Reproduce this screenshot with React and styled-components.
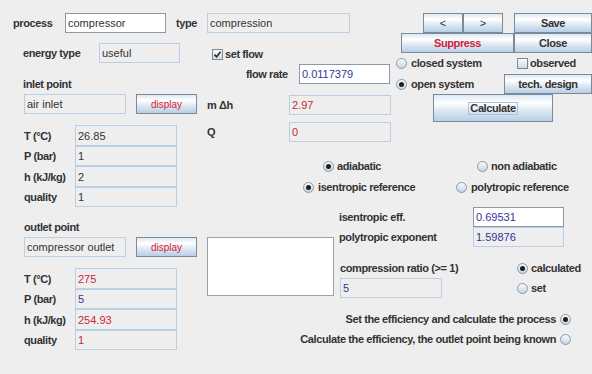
import React from "react";
import styled, { createGlobalStyle, css } from "styled-components";

const GlobalStyle = createGlobalStyle`
  html, body { margin: 0; padding: 0; background: #eeeeee; }
  body { font-family: "Liberation Sans", Arial, sans-serif; }
  * { box-sizing: border-box; }
`;

const tones = { dark: "#333333", red: "#c8283a", blue: "#34349c" };

const Panel = styled.div`
  display: flex;
  width: 592px;
  height: 374px;
  background: #eeeeee;
  overflow: hidden;
  color: #333333;
`;

const Column = styled.div`
  display: flex;
  flex-direction: column;
  width: ${(p) => p.$w}px;
  flex-shrink: 0;
  margin-left: ${(p) => p.$ml || 0}px;
`;

const Upper = styled.div`
  display: flex;
  height: 142px;
`;

const Lower = styled.div`
  display: flex;
  align-items: flex-start;
  height: 91px;
  margin-top: 13px;
`;

const Row = styled.div`
  display: flex;
  align-items: center;
  flex-shrink: 0;
  height: ${(p) => p.$h || 20}px;
  margin-top: ${(p) => p.$mt || 0}px;
  padding-left: ${(p) => p.$pl || 0}px;
  padding-right: ${(p) => p.$pr || 0}px;
  justify-content: ${(p) => (p.$end ? "flex-end" : "flex-start")};
`;

const Label = styled.span`
  font-weight: bold;
  font-size: 11px;
  letter-spacing: -0.4px;
  white-space: nowrap;
  color: #333333;
  margin-left: ${(p) => p.$ml || 0}px;
  ${(p) =>
    p.$w &&
    css`
      width: ${p.$w}px;
      flex-shrink: 0;
    `}
`;

const Field = styled.div`
  width: ${(p) => p.$w}px;
  height: ${(p) => p.$h || 20}px;
  flex-shrink: 0;
  display: flex;
  align-items: center;
  padding: 0 2px;
  font-size: 11px;
  white-space: nowrap;
  overflow: hidden;
  color: ${(p) => tones[p.$tone || "dark"]};
  background: ${(p) => (p.$edit ? "#ffffff" : "#eeeeee")};
  border: 1px solid ${(p) => (p.$edit ? "#8c99a6" : "#b8cfe5")};
  margin-left: ${(p) => p.$ml || 0}px;
`;

const PropGrid = styled.div`
  display: grid;
  grid-template-columns: 51px 102px;
  grid-template-rows: 21px 20px 21px 20px;
  align-items: center;
  margin-top: 11px;
  padding-left: 24px;
  & > ${Field} {
    height: 100%;
  }
`;

const Btn = styled.div`
  width: ${(p) => p.$w}px;
  height: ${(p) => p.$h || 20}px;
  flex-shrink: 0;
  display: flex;
  align-items: center;
  justify-content: center;
  margin-left: ${(p) => p.$ml || 0}px;
  border: 1px solid #7a8a99;
  background: linear-gradient(
    to bottom,
    #dde8f3 0%,
    #ffffff 30%,
    #dde8f3 60%,
    #b8cfe5 100%
  );
  font-size: ${(p) => (p.$small ? 10 : 11)}px;
  font-weight: ${(p) => (p.$plain || p.$small ? "normal" : "bold")};
  letter-spacing: ${(p) => (p.$plain || p.$small ? "0" : "-0.4px")};
  color: ${(p) => (p.$tone === "red" ? "#d42033" : "#333333")};
  white-space: nowrap;
`;

const Focus = styled.span`
  border: 1px solid #a9c0d6;
  padding: 0 1px;
  line-height: 11px;
`;

const Circle = styled.span`
  width: 11px;
  height: 11px;
  flex-shrink: 0;
  border-radius: 50%;
  border: 1px solid #8a98a6;
  background: linear-gradient(to bottom, #f8fafd, #c6d6e6);
  display: inline-flex;
  align-items: center;
  justify-content: center;
  margin-left: ${(p) => p.$ml || 0}px;
  &::after {
    content: "";
    width: 5px;
    height: 5px;
    border-radius: 50%;
    background: ${(p) => (p.$on ? "#1e1e1e" : "transparent")};
  }
`;

const Box = styled.span`
  width: 11px;
  height: 11px;
  flex-shrink: 0;
  border: 1px solid #7a8a99;
  background: linear-gradient(to bottom, #f8fafd, #cddbe9);
  display: inline-flex;
  align-items: center;
  justify-content: center;
`;

const Choice = styled.div`
  display: flex;
  align-items: center;
  gap: ${(p) => p.$gap ?? 3}px;
  flex-shrink: 0;
  margin-left: ${(p) => p.$ml || 0}px;
  ${(p) =>
    p.$w &&
    css`
      width: ${p.$w}px;
    `}
`;

const TextBox = styled.div`
  width: 127px;
  height: 59px;
  margin: 30px 0 0 7px;
  flex-shrink: 0;
  background: #ffffff;
  border: 1px solid #98a3ae;
`;

const Radio = ({ on, label, w, ml, gap }) => (
  <Choice $w={w} $ml={ml} $gap={gap}>
    <Circle $on={on} />
    <Label>{label}</Label>
  </Choice>
);

const Check = ({ on, label, w }) => (
  <Choice $w={w} $gap={2}>
    <Box>
      {on && (
        <svg width="9" height="9" viewBox="0 0 9 9">
          <path
            d="M1.5 4.6 L3.6 6.8 L7.6 1.8"
            fill="none"
            stroke="#2b2b2b"
            strokeWidth="1.6"
          />
        </svg>
      )}
    </Box>
    <Label>{label}</Label>
  </Choice>
);

const Props = ({ values }) => (
  <PropGrid>
    {[
      ["T (°C)", values[0]],
      ["P (bar)", values[1]],
      ["h (kJ/kg)", values[2]],
      ["quality", values[3]],
    ].map(([l, [v, tone]]) => (
      <React.Fragment key={l}>
        <Label>{l}</Label>
        <Field $w={102} $tone={tone}>
          {v}
        </Field>
      </React.Fragment>
    ))}
  </PropGrid>
);

export default function App() {
  return (
    <>
      <GlobalStyle />
      <Panel>
        <Column $w={200}>
          <Row $mt={13} $pl={13}>
            <Label $w={52}>process</Label>
            <Field $w={101} $edit>
              compressor
            </Field>
            <Label $ml={10}>type</Label>
          </Row>
          <Row $mt={10} $pl={23}>
            <Label $w={76}>energy type</Label>
            <Field $w={81}>useful</Field>
          </Row>
          <Row $mt={14} $h={14} $pl={23}>
            <Label>inlet point</Label>
          </Row>
          <Row $mt={3} $pl={24}>
            <Field $w={102}>air inlet</Field>
            <Btn $w={61} $ml={10} $small $tone="red">
              display
            </Btn>
          </Row>
          <Props
            values={[
              ["26.85", "dark"],
              ["1", "dark"],
              ["2", "dark"],
              ["1", "dark"],
            ]}
          />
          <Row $mt={13} $h={14} $pl={24}>
            <Label>outlet point</Label>
          </Row>
          <Row $mt={3} $pl={24}>
            <Field $w={102}>compressor outlet</Field>
            <Btn $w={61} $ml={10} $small $tone="red">
              display
            </Btn>
          </Row>
          <Props
            values={[
              ["275", "red"],
              ["5", "blue"],
              ["254.93", "red"],
              ["1", "red"],
            ]}
          />
        </Column>

        <Column $w={392}>
          <Upper>
            <Column $w={195}>
              <Row $mt={13} $pl={7}>
                <Field $w={143}>compression</Field>
              </Row>
              <Row $mt={14} $h={14} $pl={12}>
                <Check on label="set flow" />
              </Row>
              <Row $mt={3} $pl={46}>
                <Label $w={53}>flow rate</Label>
                <Field $w={91} $edit $tone="blue">
                  0.0117379
                </Field>
              </Row>
              <Row $mt={11} $pl={7}>
                <Label $w={82}>m Δh</Label>
                <Field $w={102} $tone="red">
                  2.97
                </Field>
              </Row>
              <Row $mt={7} $pl={7}>
                <Label $w={82}>Q</Label>
                <Field $w={102} $tone="red">
                  0
                </Field>
              </Row>
            </Column>

            <Column $w={197}>
              <Row $mt={13} $pl={28}>
                <Btn $w={40} $plain>
                  &lt;
                </Btn>
                <Btn $w={40} $plain>
                  &gt;
                </Btn>
                <Btn $w={78} $ml={11}>
                  Save
                </Btn>
              </Row>
              <Row $pl={6}>
                <Btn $w={113} $tone="red">
                  Suppress
                </Btn>
                <Btn $w={78}>Close</Btn>
              </Row>
              <Row $mt={3} $h={14} $pl={1}>
                <Radio w={121} gap={4} label="closed system" />
                <Check label="observed" />
              </Row>
              <Row $mt={4} $pl={1}>
                <Radio w={108} gap={4} on label="open system" />
                <Btn $w={88}>tech. design</Btn>
              </Row>
              <Row $h={28} $pl={38}>
                <Btn $w={120} $h={28}>
                  <Focus>Calculate</Focus>
                </Btn>
              </Row>
            </Column>
          </Upper>

          <Row $mt={17} $h={14} $pl={123}>
            <Radio w={154} on label="adiabatic" />
            <Radio label="non adiabatic" />
          </Row>
          <Row $mt={7} $h={14} $pl={103}>
            <Radio w={153} gap={4} on label="isentropic reference" />
            <Radio gap={4} label="polytropic reference" />
          </Row>

          <Lower>
            <TextBox />
            <Column $w={253} $ml={5}>
              <Row>
                <Label $w={134}>isentropic eff.</Label>
                <Field $w={91} $edit $tone="blue">
                  0.69531
                </Field>
              </Row>
              <Row>
                <Label $w={134}>polytropic exponent</Label>
                <Field $w={91} $tone="blue">
                  1.59876
                </Field>
              </Row>
              <Row $mt={14} $h={14} $pl={1}>
                <Label $w={177}>compression ratio (&gt;= 1)</Label>
                <Radio on gap={3} label="calculated" />
              </Row>
              <Row $mt={3} $pl={1}>
                <Field $w={102} $tone="blue">
                  5
                </Field>
                <Radio ml={75} gap={3} label="set" />
              </Row>
            </Column>
          </Lower>

          <Row $mt={14} $h={14} $end $pr={21}>
            <Label>Set the efficiency and calculate the process</Label>
            <Circle $on $ml={4} />
          </Row>
          <Row $mt={6} $h={14} $end $pr={21}>
            <Label>Calculate the efficiency, the outlet point being known</Label>
            <Circle $ml={4} />
          </Row>
        </Column>
      </Panel>
    </>
  );
}
